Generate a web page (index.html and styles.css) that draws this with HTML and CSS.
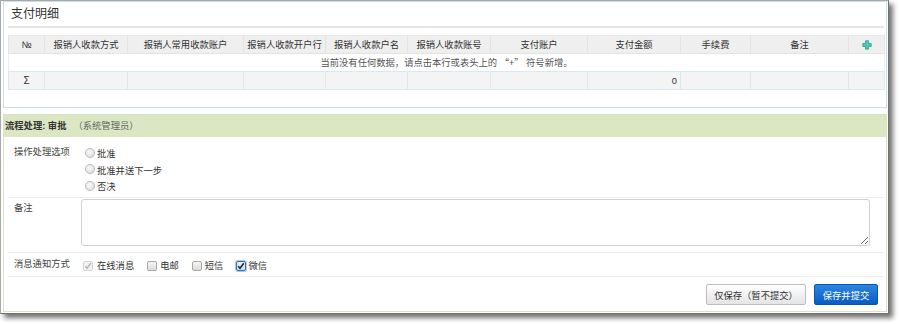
FILE: index.html
```html
<!DOCTYPE html>
<html lang="zh-CN">
<head>
<meta charset="utf-8">
<title>支付明细</title>
<link rel="stylesheet" href="styles.css">
</head>
<body>
<div class="window">
  <section class="panel pay">
    <h2 class="title">支付明细</h2>
    <table class="grid">
      <colgroup>
        <col class="c-no"><col class="c-a"><col class="c-b"><col class="c-c"><col class="c-d"><col class="c-e"><col class="c-f"><col class="c-g"><col class="c-h"><col class="c-i"><col class="c-add">
      </colgroup>
      <thead>
        <tr>
          <th>№</th><th>报销人收款方式</th><th>报销人常用收款账户</th><th>报销人收款开户行</th><th>报销人收款户名</th><th>报销人收款账号</th><th>支付账户</th><th>支付金额</th><th>手续费</th><th>备注</th>
          <th class="add"><svg width="10" height="10" viewBox="0 0 10 10"><path d="M3.5 0.8h3v2.7h2.7v3h-2.7v2.7h-3v-2.7h-2.7v-3h2.7z" fill="#4fc7b6" stroke="#2f9e8e" stroke-width="0.8" stroke-linejoin="round"/></svg></th>
        </tr>
      </thead>
      <tbody>
        <tr class="empty"><td colspan="11">当前没有任何数据，请点击本行或表头上的 <span class="cjk">“+”</span> 符号新增。</td></tr>
        <tr class="sum"><td class="sigma">Σ</td><td></td><td></td><td></td><td></td><td></td><td></td><td class="num">0</td><td></td><td></td><td></td></tr>
      </tbody>
    </table>
  </section>
  <section class="panel flow">
    <div class="flow-head"><b>流程处理: 审批</b><span class="role">（系统管理员）</span></div>
    <div class="form">
      <div class="row r-opts">
        <div class="label">操作处理选项</div>
        <div class="radios">
          <div class="opt"><span class="radio"></span>批准</div>
          <div class="opt"><span class="radio"></span>批准并送下一步</div>
          <div class="opt"><span class="radio"></span>否决</div>
        </div>
      </div>
      <div class="row r-note">
        <div class="label">备注</div>
        <textarea class="note"></textarea>
      </div>
      <div class="row r-notify">
        <div class="label">消息通知方式</div>
        <div class="checks">
          <span class="chk"><span class="cb disabled"><svg width="8" height="8" viewBox="0 0 8 8"><path d="M1.2 4.2l1.8 2 3.8-5" fill="none" stroke="#b0b0b0" stroke-width="1.4"/></svg></span>在线消息</span>
          <span class="chk"><span class="cb"></span>电邮</span>
          <span class="chk"><span class="cb"></span>短信</span>
          <span class="chk"><span class="cb focus"><svg width="8" height="8" viewBox="0 0 8 8"><path d="M1.2 4.2l1.8 2 3.8-5" fill="none" stroke="#222" stroke-width="1.5"/></svg></span>微信</span>
        </div>
      </div>
      <div class="actions">
        <button class="btn">仅保存（暂不提交）</button>
        <button class="btn primary">保存并提交</button>
      </div>
    </div>
  </section>
</div>
</body>
</html>
```
FILE: styles.css
```css
* { box-sizing: border-box; }
html, body { background: #fff; }
body {
  margin: 0;
  min-height: 324px;
  padding-bottom: 10px;
  font-family: "Liberation Sans", "Noto Sans CJK SC", sans-serif;
  font-size: 9.3px;
  color: #333;
}
.cjk { font-family: "Noto Sans CJK SC", sans-serif; }
.window {
  width: 889px;
  height: 314px;
  border: 1px solid #a8a8a8;
  border-right-color: #6f6f6f;
  border-bottom-color: #6f6f6f;
  box-shadow: 4px 4px 5px rgba(0, 0, 0, 0.55);
  padding: 0 1px 1px 2px;
  display: flex;
  flex-direction: column;
  background: #fff;
}
.panel { border: 1px solid #c9dfe7; }
.pay {
  height: 107px;
  flex: none;
  padding: 0 2px 0 4px;
}
.title {
  margin: 0;
  height: 26px;
  line-height: 24px;
  font-size: 12px;
  font-weight: normal;
  color: #333;
  padding-left: 3px;
  border-bottom: 2px solid #e6e6e6;
}
.grid {
  margin-top: 7px;
  width: 876px;
  border-collapse: collapse;
  table-layout: fixed;
}
.c-no { width: 36px; }
.c-a { width: 83px; }
.c-b { width: 116px; }
.c-c { width: 82px; }
.c-d { width: 82px; }
.c-e { width: 83px; }
.c-f { width: 97px; }
.c-g { width: 93px; }
.c-h { width: 70px; }
.c-i { width: 98px; }
.c-add { width: 36px; }
.grid th, .grid td {
  height: 18px;
  padding: 0 3px;
  line-height: 16px;
  text-align: center;
  white-space: nowrap;
  overflow: hidden;
}
.grid th {
  background: #efefef;
  font-weight: normal;
  color: #333;
  border: 1px solid #e3e3e3;
  border-top-color: #e8e8e8;
}
.grid .add svg { display: block; margin: 0 auto; }
.grid td { border: 1px solid #d9e9f1; }
.empty td { background: #fff; color: #555; border-left-color: #e6eef2; border-right-color: #e6eef2; }
.sum td { background: #f4f4f4; }
.sum .num { text-align: right; padding-right: 3px; }
.sigma { font-size: 10px; }

.flow {
  margin-top: 6px;
  flex: 1;
  border-color: #d7e4c3;
}
.flow-head {
  height: 22px;
  line-height: 22px;
  background: #dae7c2;
  padding-left: 1px;
  color: #333;
}
.flow-head b { font-weight: bold; }
.role { color: #666; margin-left: 7px; }
.form { margin: 0 2px 0 4px; }
.row {
  display: flex;
  padding-left: 6px;
  border-bottom: 1px solid #ececec;
}
.label {
  width: 67px;
  flex: none;
  line-height: 16px;
  color: #444;
}
.r-opts { height: 61px; }
.r-opts .label { padding-top: 7px; }
.radios { padding: 9px 0 0 4px; }
.opt {
  display: flex;
  align-items: center;
  height: 16.5px;
  line-height: 16.5px;
  color: #333;
}
.radio {
  width: 10px;
  height: 10px;
  border-radius: 50%;
  border: 1px solid #b8b8b8;
  background: radial-gradient(circle at 40% 35%, #fafafa 0, #e4e4e4 70%, #d2d2d2 100%);
  margin: 0 2px 3px 0;
  flex: none;
}
.r-note { height: 55px; padding-top: 1px; }
.r-note .label { padding-top: 1px; }
.note {
  width: 789px;
  height: 47px;
  border: 1px solid #cfcfcf;
  border-radius: 3px;
  margin: 0;
  padding: 2px;
  font: inherit;
  background: #fff;
}
.r-notify { height: 24px; padding-top: 3px; }
.checks { display: flex; line-height: 16px; padding-left: 2px; }
.chk { display: flex; align-items: center; margin-right: 13px; color: #333; }
.cb {
  width: 10px;
  height: 10px;
  border: 1px solid #a9a9a9;
  border-radius: 2px;
  background: linear-gradient(#f6f6f6, #dcdcdc);
  margin-right: 3px;
  display: flex;
  align-items: center;
  justify-content: center;
  flex: none;
}
.cb.disabled { border-color: #d6d6d6; background: #f2f2f2; margin-right: 4px; }
.cb.focus {
  border-color: #3b6fa8;
  background: linear-gradient(#e6f1fb, #c7ddf2);
  box-shadow: 0 0 0 1px #a8c8ea;
  margin-right: 2px;
}
.actions {
  display: flex;
  justify-content: flex-end;
  gap: 8px;
  padding: 7px 6px 0 0;
}
.btn {
  height: 21px;
  width: 100px;
  padding: 0;
  font: inherit;
  color: #333;
  border: 1px solid #bdbdbd;
  border-radius: 2px;
  background: linear-gradient(#ffffff, #e4e4e4);
}
.btn.primary {
  width: 64px;
  color: #fff;
  border-color: #0b55b0;
  background: linear-gradient(#2a86e2, #0a5cc0);
}
```
